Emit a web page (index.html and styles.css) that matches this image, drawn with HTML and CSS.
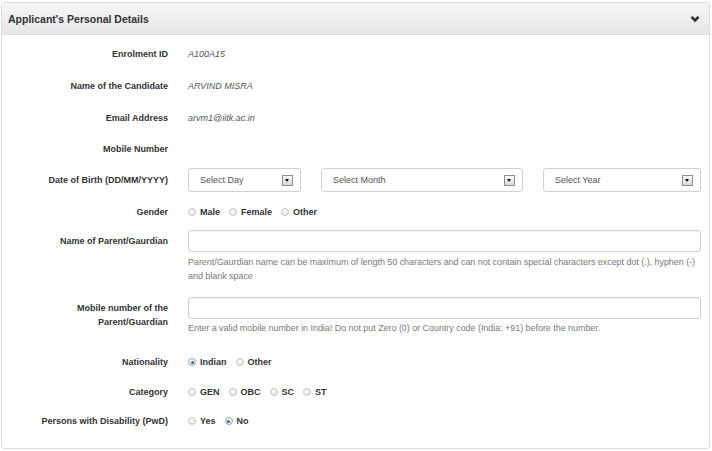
FILE: index.html
```html
<!DOCTYPE html>
<html lang="en">

<head>
    <meta charset="UTF-8">
    <title>Applicant's Personal Details</title>
    <link rel="stylesheet" href="styles.css">
</head>

<body>
    <div class="panel">
        <div class="panel-heading">
            <h3>Applicant's Personal Details</h3>
            <svg class="chevron" width="10" height="8" viewBox="0 0 10 8">
                <polyline points="1.5,1.8 5,5.3 8.5,1.8" fill="none" stroke="#2b2b2b" stroke-width="2.6" />
            </svg>
        </div>

        <div class="panel-body">
            <div class="row gap-16">
                <div class="lbl">Enrolment ID</div>
                <div class="val"><span class="static">A100A15</span></div>
            </div>
            <div class="row gap-16">
                <div class="lbl">Name of the Candidate</div>
                <div class="val"><span class="static">ARVIND MISRA</span></div>
            </div>
            <div class="row gap-15">
                <div class="lbl">Email Address</div>
                <div class="val"><span class="static">arvm1@iitk.ac.in</span></div>
            </div>
            <div class="row gap-11">
                <div class="lbl">Mobile Number</div>
                <div class="val"></div>
            </div>

            <div class="row gap-12">
                <div class="lbl tall">Date of Birth (DD/MM/YYYY)</div>
                <div class="val dob">
                    <div class="select">Select Day<span class="arrow"></span></div>
                    <div class="select">Select Month<span class="arrow"></span></div>
                    <div class="select">Select Year<span class="arrow"></span></div>
                </div>
            </div>

            <div class="row gap-10">
                <div class="lbl">Gender</div>
                <div class="val radios">
                    <span class="radio"></span><b>Male</b>
                    <span class="radio"></span><b>Female</b>
                    <span class="radio"></span><b>Other</b>
                </div>
            </div>

            <div class="row gap-14">
                <div class="lbl input-lbl">Name of Parent/Gaurdian</div>
                <div class="val">
                    <div class="input"></div>
                    <p class="help">Parent/Gaurdian name can be maximum of length 50 characters and can not contain special characters except dot (.), hyphen (-) and blank space</p>
                </div>
            </div>

            <div class="row gap-19">
                <div class="lbl two-line">Mobile number of the Parent/Guardian</div>
                <div class="val">
                    <div class="input"></div>
                    <p class="help tight">Enter a valid mobile number in India! Do not put Zero (0) or Country code (India: +91) before the number.</p>
                </div>
            </div>

            <div class="row gap-14">
                <div class="lbl">Nationality</div>
                <div class="val radios">
                    <span class="radio checked"></span><b>Indian</b>
                    <span class="radio"></span><b>Other</b>
                </div>
            </div>
            <div class="row gap-13">
                <div class="lbl">Category</div>
                <div class="val radios">
                    <span class="radio"></span><b>GEN</b>
                    <span class="radio"></span><b>OBC</b>
                    <span class="radio"></span><b>SC</b>
                    <span class="radio"></span><b>ST</b>
                </div>
            </div>
            <div class="row">
                <div class="lbl">Persons with Disability (PwD)</div>
                <div class="val radios">
                    <span class="radio"></span><b>Yes</b>
                    <span class="radio checked"></span><b>No</b>
                </div>
            </div>
        </div>
    </div>
</body>

</html>
```

FILE: styles.css
```css
* {
    box-sizing: border-box;
    margin: 0;
    padding: 0;
}

body {
    font-family: 'Liberation Sans', Arial, sans-serif;
    font-size: 9px;
    color: #333;
    background: #fff;
}

.panel {
    margin: 2px 2px 0 1px;
    border: 1px solid #dcdcdc;
    border-radius: 3px;
}

.panel-heading {
    display: flex;
    justify-content: space-between;
    align-items: center;
    height: 32px;
    padding: 0 9px 0 6px;
    background: linear-gradient(#f6f6f6, #e7e7e7);
    border-bottom: 1px solid #dcdcdc;
}

.panel-heading h3 {
    font-size: 10.5px;
    font-weight: bold;
    color: #333;
}

.chevron {
    display: block;
}

.panel-body {
    padding: 11px 8px 19px 0;
}

.row {
    display: flex;
    align-items: flex-start;
}

.gap-10 { margin-bottom: 10px; }
.gap-11 { margin-bottom: 11px; }
.gap-12 { margin-bottom: 12px; }
.gap-13 { margin-bottom: 13px; }
.gap-14 { margin-bottom: 14px; }
.gap-15 { margin-bottom: 15px; }
.gap-16 { margin-bottom: 16px; }
.gap-19 { margin-bottom: 19px; }

.lbl {
    flex: 0 0 166px;
    padding-left: 26px;
    text-align: right;
    font-weight: bold;
    line-height: 16px;
    min-height: 16px;
    color: #333;
}

.lbl.tall {
    line-height: 24px;
}

.lbl.input-lbl {
    line-height: 22px;
}

.lbl.two-line {
    line-height: 14px;
    padding-top: 4px;
}

.val {
    flex: 1;
    margin-left: 20px;
    min-height: 16px;
    line-height: 16px;
}

.static {
    font-style: italic;
    color: #555;
}

/* date of birth selects */
.dob {
    display: grid;
    grid-template-columns: 113px 202px 1fr;
    column-gap: 20px;
}

.select {
    display: flex;
    justify-content: space-between;
    align-items: center;
    height: 24px;
    padding: 0 7px 0 11px;
    border: 1px solid #d0d0d0;
    border-radius: 3px;
    color: #555;
    background: #fff;
}

.arrow {
    position: relative;
    width: 11px;
    height: 11px;
    border: 1px solid #8c8c8c;
    background: linear-gradient(#fafafa, #d9d9d9);
}

.arrow::after {
    content: "";
    position: absolute;
    left: 2px;
    top: 3px;
    border-left: 2.5px solid transparent;
    border-right: 2.5px solid transparent;
    border-top: 3px solid #111;
}

/* radios */
.radios {
    display: flex;
    align-items: center;
    height: 16px;
}

.radios b {
    color: #333;
    margin: 0 9px 0 4px;
}

.radio {
    width: 8px;
    height: 8px;
    border-radius: 50%;
    border: 1px solid #c4c4c4;
    background: radial-gradient(circle at 40% 35%, #fff, #dedede);
    position: relative;
}

.radio.checked {
    border-color: #9aa4ae;
}

.radio.checked::after {
    content: "";
    position: absolute;
    left: 1.5px;
    top: 1.5px;
    width: 3px;
    height: 3px;
    border-radius: 50%;
    background: #2c6aa8;
}

/* text inputs */
.input {
    height: 22px;
    border: 1px solid #cfcfcf;
    border-radius: 3px;
    box-shadow: inset 0 1px 1px rgba(0, 0, 0, 0.04);
}

.help {
    margin-top: 3px;
    line-height: 14px;
    letter-spacing: -0.05px;
    color: #7a7a7a;
}

.help.tight {
    margin-top: 2px;
}
```
